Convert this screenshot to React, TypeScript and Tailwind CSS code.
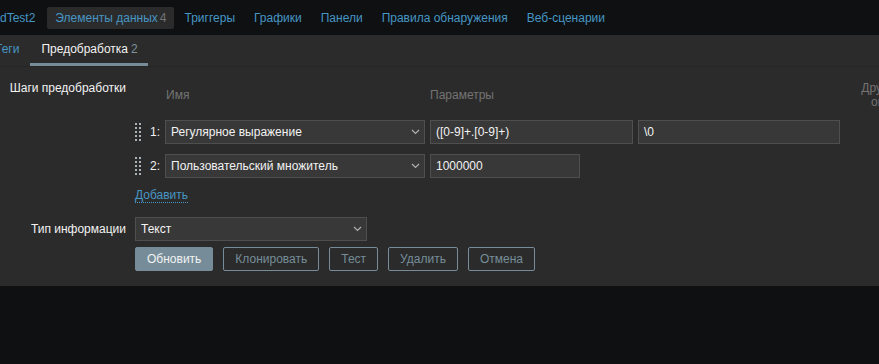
import React from 'react';

const navItems = ['Триггеры', 'Графики', 'Панели', 'Правила обнаружения', 'Веб-сценарии'];

const DragHandle: React.FC = () => (
  <div className="w-[15px] flex items-center">
    <div className="grid grid-cols-2 gap-x-[2px] gap-y-[2px]">
      {Array.from({ length: 10 }).map((_, i) => (
        <span key={i} className="block w-[2px] h-[2px] bg-[#aab3b8]" />
      ))}
    </div>
  </div>
);

const Chevron: React.FC = () => (
  <svg width="9" height="6" viewBox="0 0 9 6" fill="none" className="shrink-0">
    <path d="M1 1l3.5 3.5L8 1" stroke="#b0b0b0" strokeWidth="1.2" />
  </svg>
);

const Select: React.FC<{ value: string; width: string }> = ({ value, width }) => (
  <div
    className={`${width} h-[24px] flex items-center justify-between pl-[5px] pr-[4px] bg-[#383838] border border-[#4f4f4f] text-[#f2f2f2]`}
  >
    <span>{value}</span>
    <Chevron />
  </div>
);

const Input: React.FC<{ value: string; width: string }> = ({ value, width }) => (
  <div
    className={`${width} h-[24px] flex items-center px-[5px] bg-[#383838] border border-[#4f4f4f] text-[#f2f2f2]`}
  >
    {value}
  </div>
);

const App: React.FC = () => {
  return (
    <div className="w-[879px] h-[364px] overflow-hidden bg-[#0e1012] font-['Liberation_Sans',Arial,sans-serif] text-[12px] leading-[14px]">
      {/* top navigation */}
      <nav className="h-[35px] flex items-center gap-[3px] whitespace-nowrap">
        <a className="-ml-[8px] h-[22px] flex items-center px-2 text-[#4796c4]">dTest2</a>
        <a className="ml-[1px] h-[22px] flex items-center pl-2 pr-[7px] bg-[#2b2b2b] rounded-[2px] text-[#4796c4]">
          Элементы данных<span className="ml-[2px] text-[#737373]">4</span>
        </a>
        {navItems.map((n) => (
          <a key={n} className="h-[22px] flex items-center px-2 text-[#4796c4]">
            {n}
          </a>
        ))}
      </nav>

      {/* tabs */}
      <div className="h-[32px] flex items-stretch bg-[#2b2b2b] border-b border-[#262626] whitespace-nowrap">
        <a className="-ml-[16px] flex items-center px-[11px] text-[#4796c4] border-b-[3px] border-transparent">Теги</a>
        <a className="flex items-center pl-[11px] pr-[10px] text-[#f2f2f2] border-b-[3px] border-[#768d99]">
          Предобработка<span className="ml-[3px] text-[#7e909b]">2</span>
        </a>
      </div>

      {/* form */}
      <div className="bg-[#2b2b2b] pt-[10px] pb-[15px] text-[#f2f2f2]">
        <div className="flex">
          <div className="w-[126px] shrink-0 text-right pt-[4px] whitespace-nowrap">Шаги предобработки</div>
          <div className="ml-[9px] flex flex-col">
            <div className="h-[36px] flex items-center text-[#737373] whitespace-nowrap">
              <div className="w-[31px] shrink-0" />
              <div className="w-[264px] shrink-0">Имя</div>
              <div className="w-[422px] shrink-0">Параметры</div>
              <div className="w-[80px] shrink-0 whitespace-normal text-center">Другое при ошибке</div>
            </div>
            <div className="mt-[7px] flex flex-col gap-[10px] whitespace-nowrap">
              <div className="flex items-center">
                <DragHandle />
                <span className="w-[15px]">1:</span>
                <Select value="Регулярное выражение" width="w-[260px]" />
                <div className="ml-[5px]">
                  <Input value="([0-9]+.[0-9]+)" width="w-[203px]" />
                </div>
                <div className="ml-[5px]">
                  <Input value="\0" width="w-[202px]" />
                </div>
              </div>
              <div className="flex items-center">
                <DragHandle />
                <span className="w-[15px]">2:</span>
                <Select value="Пользовательский множитель" width="w-[260px]" />
                <div className="ml-[5px]">
                  <Input value="1000000" width="w-[150px]" />
                </div>
              </div>
            </div>
            <div className="mt-[10px]">
              <a className="text-[#4796c4] border-b border-dotted border-[#4796c4]">Добавить</a>
            </div>
          </div>
        </div>

        <div className="flex items-center mt-[15px]">
          <div className="w-[126px] shrink-0 text-right whitespace-nowrap">Тип информации</div>
          <div className="ml-[9px]">
            <Select value="Текст" width="w-[232px]" />
          </div>
        </div>

        <div className="flex gap-[10px] ml-[135px] mt-[6px] whitespace-nowrap">
          <button className="h-[24px] px-[11px] rounded-[2px] bg-[#768d99] border border-[#768d99] text-[#f2f2f2]">
            Обновить
          </button>
          {['Клонировать', 'Тест', 'Удалить', 'Отмена'].map((b) => (
            <button
              key={b}
              className="h-[24px] px-[11px] rounded-[2px] bg-[#2b2b2b] border border-[#768d99] text-[#768d99]"
            >
              {b}
            </button>
          ))}
        </div>
      </div>
    </div>
  );
};

export default App;
